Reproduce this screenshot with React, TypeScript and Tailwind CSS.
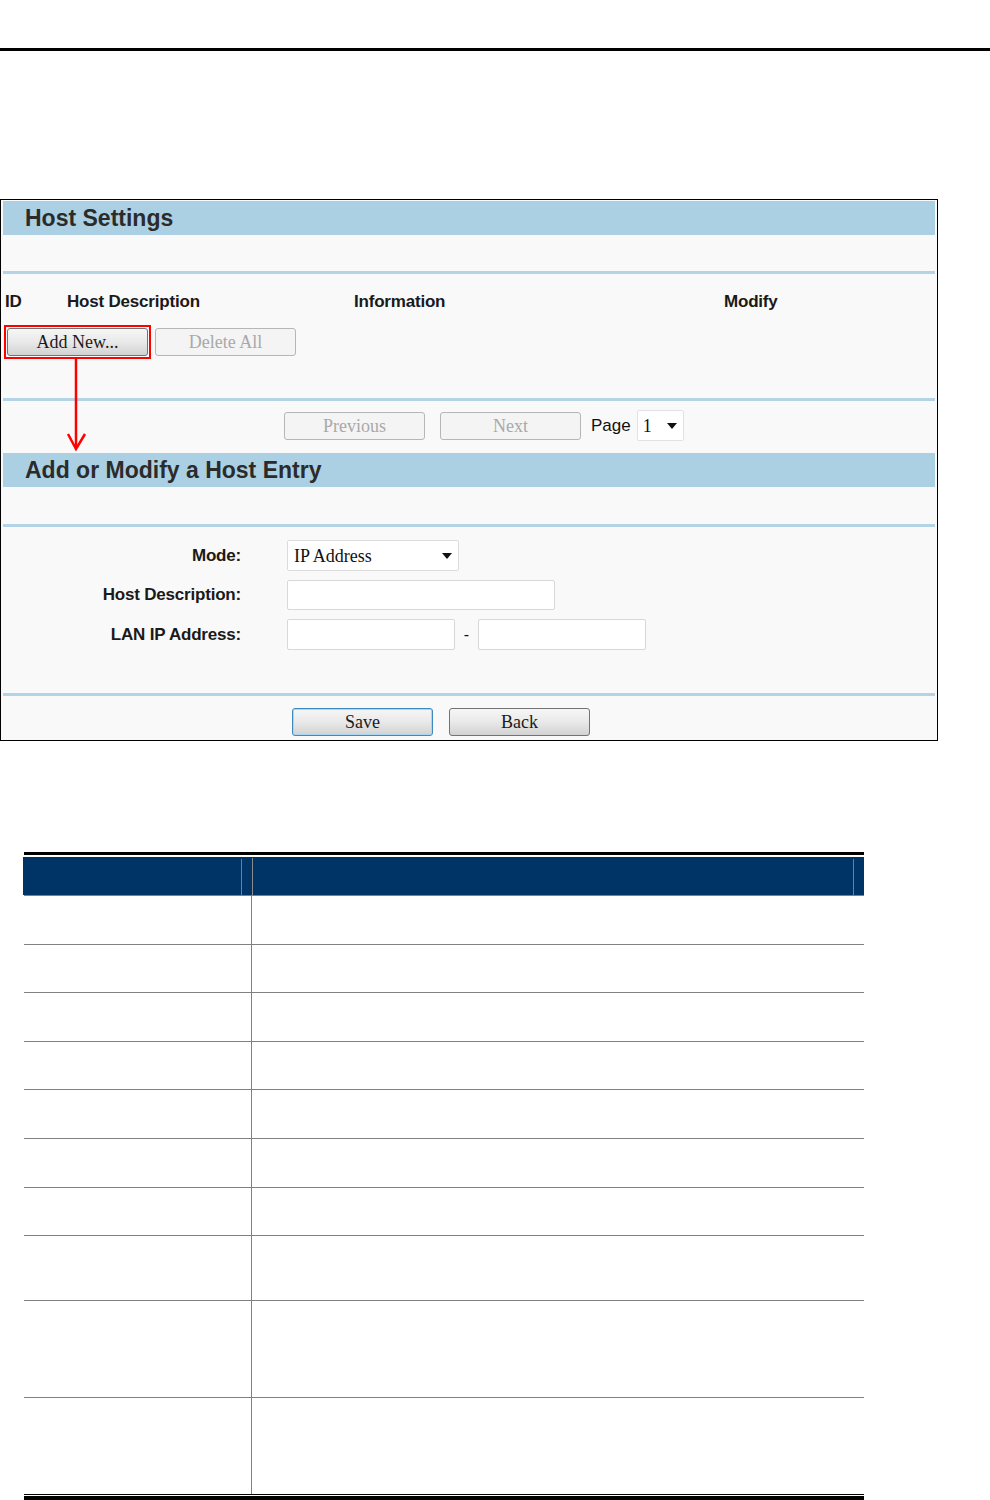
import React from "react";

const sans = { fontFamily: '"Liberation Sans", Arial, sans-serif' };
const serif = { fontFamily: '"Liberation Serif", "Times New Roman", serif' };

function Caret() {
  return (
    <svg width="10" height="6" viewBox="0 0 10 6" className="shrink-0">
      <polygon points="0,0 10,0 5,6" fill="#111" />
    </svg>
  );
}

function Btn({ label, disabled, focus }: { label: string; disabled?: boolean; focus?: boolean }) {
  const base = "flex h-[28px] w-[141px] items-center justify-center rounded-[3px] border text-[18px] leading-none";
  if (disabled) {
    return (
      <div className={`${base} border-[#b4b7ba] bg-[#f4f4f4] text-[#a9a9a9]`} style={serif}>
        {label}
      </div>
    );
  }
  return (
    <div
      className={`${base} bg-gradient-to-b from-[#f6f6f6] via-[#e9e9e9] to-[#d2d2d2] text-[#1b1b1b] ${
        focus ? "border-[#3d8ac2] shadow-[inset_0_0_0_1px_#a9d6f3]" : "border-[#737373]"
      }`}
      style={serif}
    >
      {label}
    </div>
  );
}

function HeaderBar({ title }: { title: string }) {
  return (
    <div className="flex h-[34px] items-center bg-[#acd0e3] pl-[22px]">
      <span className="text-[23px] font-bold leading-none text-[#2b2b2b]" style={sans}>
        {title}
      </span>
    </div>
  );
}

function Rule() {
  return <div className="h-[3px] bg-[#b3d3e6]" />;
}

function FormRow({ label, children, className }: { label: string; children: React.ReactNode; className: string }) {
  return (
    <div className={`flex h-[31px] items-center ${className}`}>
      <div className="w-[238px] text-right text-[17px] font-bold tracking-[-0.2px] text-[#1a1a1a]" style={sans}>
        {label}
      </div>
      <div className="ml-[46px] flex items-center">{children}</div>
    </div>
  );
}

const rowHeights = [49, 48, 49, 48, 49, 49, 48, 65, 97, 97];

export default function App() {
  return (
    <div className="relative h-[1500px] w-[990px] overflow-hidden bg-white">
      <div className="mt-[48px] h-[3px] bg-black" />

      {/* router settings panel */}
      <div className="mt-[148px] w-[938px] border border-black bg-[#f9f9f9] px-[2px] pt-[1px] pb-[4px]">
        <HeaderBar title="Host Settings" />
        <div className="h-[36px]" />
        <Rule />
        <div
          className="flex h-[51px] items-center pt-[5px] pl-[2px] text-[17px] font-bold tracking-[-0.2px] text-[#1a1a1a]"
          style={sans}
        >
          <span className="w-[62px]">ID</span>
          <span className="w-[287px]">Host Description</span>
          <span className="w-[370px]">Information</span>
          <span>Modify</span>
        </div>
        <div className="flex items-center">
          <div className="ml-[1px] border-2 border-[#ff0000] px-[1px] py-[1px]">
            <Btn label="Add New..." />
          </div>
          <div className="ml-[4px]">
            <Btn label="Delete All" disabled />
          </div>
        </div>
        <div className="mt-[39px]">
          <Rule />
        </div>
        <div className="mt-[9px] flex h-[31px] items-center pl-[281px]">
          <Btn label="Previous" disabled />
          <div className="ml-[15px]">
            <Btn label="Next" disabled />
          </div>
          <span className="ml-[10px] text-[17px] text-[#111]" style={sans}>
            Page
          </span>
          <div className="ml-[6px] flex h-[31px] w-[47px] items-center justify-between rounded-[2px] border border-[#e2e2e2] bg-white pr-[6px] pl-[5px]">
            <span className="text-[18px] leading-none text-[#111]" style={serif}>
              1
            </span>
            <Caret />
          </div>
        </div>
        <div className="mt-[12px]">
          <HeaderBar title="Add or Modify a Host Entry" />
        </div>
        <div className="h-[37px]" />
        <Rule />
        <FormRow label="Mode:" className="mt-[13px]">
          <div className="flex h-[31px] w-[172px] items-center justify-between rounded-[2px] border border-[#dcdcdc] bg-white pr-[6px] pl-[6px]">
            <span className="text-[18px] leading-none text-[#111]" style={serif}>
              IP Address
            </span>
            <Caret />
          </div>
        </FormRow>
        <FormRow label="Host Description:" className="mt-[8px]">
          <div className="h-[30px] w-[268px] rounded-[2px] border border-[#d8d8d8] bg-white" />
        </FormRow>
        <FormRow label="LAN IP Address:" className="mt-[9px]">
          <div className="h-[31px] w-[168px] rounded-[2px] border border-[#d8d8d8] bg-white" />
          <span className="w-[23px] text-center text-[16px] text-[#111]" style={sans}>
            -
          </span>
          <div className="h-[31px] w-[168px] rounded-[2px] border border-[#d8d8d8] bg-white" />
        </FormRow>
        <div className="mt-[43px]">
          <Rule />
        </div>
        <div className="mt-[12px] flex items-center pl-[289px]">
          <Btn label="Save" focus />
          <div className="ml-[16px]">
            <Btn label="Back" />
          </div>
        </div>
      </div>

      {/* red arrow pointing from Add New to the entry form */}
      <svg className="absolute top-[356px] left-[60px]" width="32" height="98" viewBox="0 0 32 98">
        <line x1="16" y1="2" x2="16" y2="92" stroke="#ff0000" strokeWidth="2.5" />
        <polyline points="8,78 16,93 25,78" fill="none" stroke="#ff0000" strokeWidth="2.5" />
      </svg>

      {/* description table */}
      <div className="mt-[111px] ml-[23px] w-[841px]">
        <div className="ml-px h-[3px] w-[840px] bg-black" />
        <div className="mt-[2px] flex h-[38px] bg-[#003366]">
          <div className="w-[218px]" />
          <div className="mt-[2px] w-px bg-[#5d83ad]" />
          <div className="w-[10px]" />
          <div className="mt-[1px] w-px bg-[#8a8a8a]" />
          <div className="w-[600px]" />
          <div className="mt-[2px] w-px bg-[#5d83ad]" />
          <div className="flex-1" />
        </div>
        <div className="ml-px h-px w-[840px] bg-[#808080]" />
        <div className="ml-px w-[840px]">
          {rowHeights.map((h, i) => (
            <div
              key={i}
              className={`flex border-b ${i === rowHeights.length - 1 ? "border-black" : "border-[#808080]"}`}
              style={{ height: h }}
            >
              <div className="w-[228px] border-r border-[#808080]" />
              <div className="flex-1" />
            </div>
          ))}
        </div>
        <div className="mt-[1px] ml-px h-[4px] w-[840px] bg-black" />
      </div>
    </div>
  );
}
